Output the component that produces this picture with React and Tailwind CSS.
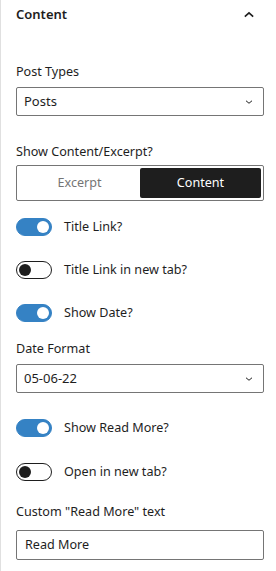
import React, { useState } from 'react'

function Toggle({ on, onClick }) {
  return (
    <button
      onClick={onClick}
      className={`relative h-[18px] w-[36px] shrink-0 rounded-full border ${on ? 'border-[#3582c4] bg-[#3582c4]' : 'border-[#1e1e1e] bg-white'}`}
    >
      <span
        className={`absolute top-[2px] h-[12px] w-[12px] rounded-full ${on ? 'left-[20px] bg-white' : 'left-[2px] bg-[#1e1e1e]'}`}
      />
    </button>
  )
}

function Chevron() {
  return (
    <svg width="12" height="12" viewBox="0 0 24 24" fill="none" stroke="#1e1e1e" strokeWidth="2">
      <path d="M6 9.5l6 5 6-5" />
    </svg>
  )
}

function Select({ value }) {
  return (
    <div className="flex h-[29px] items-center justify-between rounded-[2px] border border-[#757575] pl-[7px] pr-[8px] text-[13px] text-[#1e1e1e]">
      <span>{value}</span>
      <Chevron />
    </div>
  )
}

export default function App() {
  const [mode, setMode] = useState('content')
  const [toggles, setToggles] = useState({ title: true, titleTab: false, date: true, more: true, moreTab: false })
  const flip = (k) => setToggles({ ...toggles, [k]: !toggles[k] })

  return (
    <div className="min-h-screen border-l border-[#e0e0e0] bg-white pl-[15px] pr-[12px] text-[12.6px] text-[#1e1e1e]" style={{ fontFamily: '"Noto Sans", sans-serif' }}>
      <div className="flex h-[29px] items-center justify-between">
        <h2 className="text-[13px] font-semibold">Content</h2>
        <svg width="20" height="20" viewBox="0 0 24 24" fill="none" stroke="#1e1e1e" strokeWidth="2" className="mr-[5px]">
          <path d="M7 14l5-4.5 5 4.5" />
        </svg>
      </div>

      <div className="mt-[34px]">
        <p className="mb-[6px] leading-[18px]">Post Types</p>
        <Select value="Posts" />
      </div>

      <div className="mt-[27px]">
        <p className="mb-[4px] leading-[18px]">Show Content/Excerpt?</p>
        <div className="flex h-[36px] rounded-[2px] border border-[#757575] p-[2px]">
          <button onClick={() => setMode('excerpt')} className={`flex-1 rounded-[2px] ${mode === 'excerpt' ? 'bg-[#1e1e1e] text-white' : 'text-[#757575]'}`}>Excerpt</button>
          <button onClick={() => setMode('content')} className={`flex-1 rounded-[2px] ${mode === 'content' ? 'bg-[#1e1e1e] text-white' : 'text-[#757575]'}`}>Content</button>
        </div>
      </div>

      <div className="mt-[17px] flex flex-col gap-[25px]">
        <label className="flex h-[18px] items-center gap-3"><Toggle on={toggles.title} onClick={() => flip('title')} /><span>Title Link?</span></label>
        <label className="flex h-[18px] items-center gap-3"><Toggle on={toggles.titleTab} onClick={() => flip('titleTab')} /><span>Title Link in new tab?</span></label>
        <label className="flex h-[18px] items-center gap-3"><Toggle on={toggles.date} onClick={() => flip('date')} /><span>Show Date?</span></label>
      </div>

      <div className="mt-[18px]">
        <p className="mb-[6px] leading-[18px]">Date Format</p>
        <Select value="05-06-22" />
      </div>

      <div className="mt-[26px] flex flex-col gap-[26px]">
        <label className="flex h-[18px] items-center gap-3"><Toggle on={toggles.more} onClick={() => flip('more')} /><span>Show Read More?</span></label>
        <label className="flex h-[18px] items-center gap-3"><Toggle on={toggles.moreTab} onClick={() => flip('moreTab')} /><span>Open in new tab?</span></label>
      </div>

      <div className="mt-[22px]">
        <p className="mb-[9px] leading-[18px]">Custom "Read More" text</p>
        <div className="flex h-[30px] items-center rounded-[2px] border border-[#757575] px-[8px]">Read More</div>
      </div>
    </div>
  )
}
